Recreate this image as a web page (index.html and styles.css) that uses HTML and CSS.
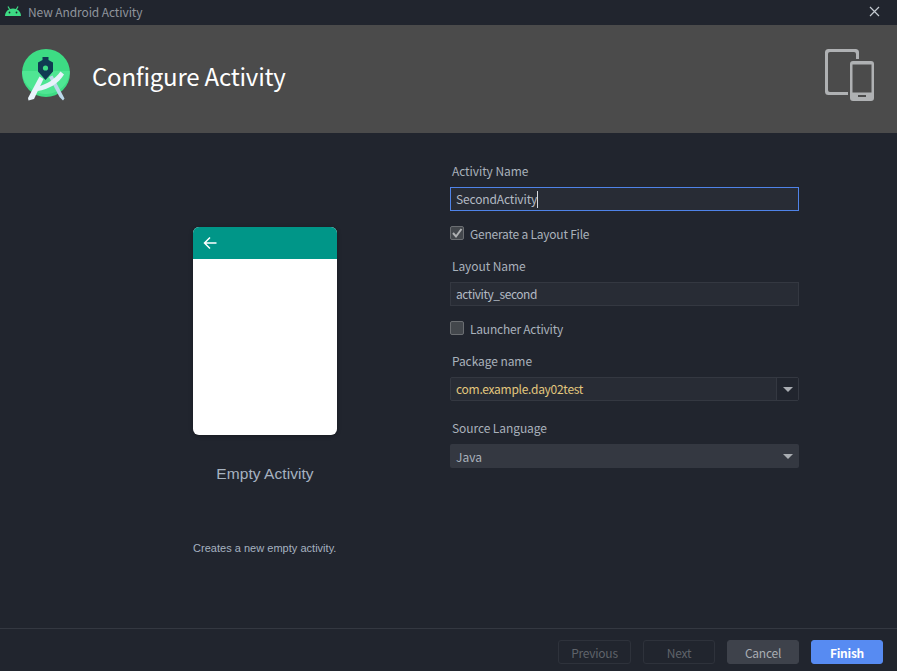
FILE: index.html
```html
<!DOCTYPE html>
<html lang="en">
<head>
<meta charset="utf-8">
<title>New Android Activity</title>
<link rel="stylesheet" href="styles.css">
</head>
<body>
<div class="window">
  <header class="titlebar">
    <svg class="android" width="16" height="10" viewBox="0 0 16 10"><path d="M0 10C0 5.500 3.500 2.500 8 2.500S16 5.500 16 10Z" fill="#3ddc84"/><path d="M3 0.500 5 4M13 0.500 11 4" stroke="#3ddc84" stroke-width="1.200"/><circle cx="4.500" cy="6.500" r="0.900" fill="#21252e"/><circle cx="11.500" cy="6.500" r="0.900" fill="#21252e"/></svg>
    <span class="titlebar-text">New Android Activity</span>
    <svg class="close" width="11" height="11" viewBox="0 0 11 11"><path d="M1 1 10 10M10 1 1 10" stroke="#c4cad1" stroke-width="1.200"/></svg>
  </header>
  <section class="banner">
    <svg class="logo" width="48" height="53" viewBox="0 0 48 53">
      <circle cx="24" cy="24" r="24" fill="#3ddc84"/>
      <path d="M0.200 22H47.800A24 24 0 0 1 0 24Z" fill="#57ea9a" opacity=".7"/>
      <path d="M27 28 30.500 26.500 42.500 49.500 41 51.500 37.500 48Z" fill="#bcd8ea"/>
      <path d="M15.500 42C27 40.500 37 34 42 25.500L38.500 22.500C33 30 25 35.500 14.500 38Z" fill="#e8f3fb"/>
      <path d="M17.500 27.500 21.500 30 12 50 6.500 51.500 6 49Z" fill="#e8f3fb"/>
      <path d="M20.500 8H26.500V11L31 13.500V22.500L23.500 31 16 22.500V13.500L20.500 11Z" fill="#0f3a52"/>
      <circle cx="23.500" cy="19" r="2.600" fill="#3ddc84"/>
    </svg>
    <h1 class="banner-title">Configure Activity</h1>
    <svg class="devices" width="49" height="52" viewBox="0 0 49 52">
      <path d="M3.500 0H30.500A3.500 3.500 0 0 1 34 3.500V10H31V5A2 2 0 0 0 29 3H5A2 2 0 0 0 3 5V41A2 2 0 0 0 5 43H23V46H3.500A3.500 3.500 0 0 1 0 42.500V3.500A3.500 3.500 0 0 1 3.500 0Z" fill="#afb1b3"/>
      <path fill-rule="evenodd" d="M28 12H46A3 3 0 0 1 49 15V49A3 3 0 0 1 46 52H28A3 3 0 0 1 25 49V15A3 3 0 0 1 28 12ZM27.500 15.500V43.500H46.500V15.500ZM33 46V48H41V46Z" fill="#afb1b3"/>
    </svg>
  </section>
  <main class="content">
    <aside class="preview">
      <div class="phone">
        <div class="phone-bar">
          <svg width="14" height="14" viewBox="0 0 14 14"><path d="M13.500 7H1.500M7 1.500 1.500 7 7 12.500" stroke="#fff" stroke-width="1.500" fill="none"/></svg>
        </div>
      </div>
      <div class="preview-title">Empty Activity</div>
      <p class="preview-desc">Creates a new empty activity.</p>
    </aside>
    <form class="form">
      <label class="field-label first">Activity Name</label>
      <div class="input focused"><span class="input-text name">SecondActivity</span><i class="caret"></i></div>
      <div class="check-row">
        <span class="checkbox"><svg width="12" height="12" viewBox="0 0 12 12"><path d="M2 6 5 9.500 10.500 2" stroke="#afb1b3" stroke-width="2" fill="none"/></svg></span>
        <span class="check-text">Generate a Layout File</span>
      </div>
      <label class="field-label">Layout Name</label>
      <div class="input"><span class="input-text layout">activity_second</span></div>
      <div class="check-row">
        <span class="checkbox"></span>
        <span class="check-text">Launcher Activity</span>
      </div>
      <label class="field-label">Package name</label>
      <div class="input combo">
        <span class="input-text combo-text">com.example.day02test</span>
        <span class="combo-arrow"><i class="arrow"></i></span>
      </div>
      <label class="field-label lang">Source Language</label>
      <div class="select"><span class="input-text java">Java</span><i class="arrow"></i></div>
    </form>
  </main>
  <footer class="footer">
    <button class="btn disabled prev" type="button">Previous</button>
    <button class="btn disabled" type="button">Next</button>
    <button class="btn cancel" type="button">Cancel</button>
    <button class="btn primary" type="button">Finish</button>
  </footer>
</div>
</body>
</html>
```

FILE: styles.css
```css
* { box-sizing: border-box; }
html, body { margin: 0; padding: 0; }
body { background: #21252e; font-family: "Noto Sans CJK KR", "Noto Sans", sans-serif; font-size: 12px; color: #a9b1bb; }
.window { width: 897px; height: 671px; display: flex; flex-direction: column; overflow: hidden; }
.titlebar { height: 25px; flex: none; display: flex; align-items: center; padding: 0 17px 0 5px; background: #21252e; }
.android { margin-bottom: 3px; }
.titlebar-text { margin-left: 7px; margin-bottom: 2px; color: #8f949c; flex: 1; line-height: 16px; letter-spacing: -.1px; }
.close { margin-bottom: 3px; }
.banner { height: 108px; flex: none; display: flex; align-items: flex-start; background: #4b4b4b; padding: 24px 23px 0 22px; }
.logo { flex: none; }
.banner-title { flex: 1; margin: 11px 0 0 22px; font-size: 24px; line-height: 32px; font-weight: 400; letter-spacing: -.22px; color: #fff; }
.devices { flex: none; }
.content { flex: 1; display: flex; align-items: flex-start; }
.preview { width: 144px; margin-left: 193px; padding-top: 94px; flex: none; }
.phone { height: 208px; background: #fff; border-radius: 6px; overflow: hidden; box-shadow: 0 1px 4px rgba(0,0,0,.3); }
.phone-bar { height: 32px; background: #009688; display: flex; align-items: center; padding-left: 10px; }
.phone-bar svg { display: block; }
.preview-title { margin-top: 29px; text-align: center; font-family: "Liberation Sans", sans-serif; font-size: 15.500px; letter-spacing: .06px; line-height: 20px; color: #a6b2c0; white-space: nowrap; }
.preview-desc { margin: 57px 0 0; font-family: "Liberation Sans", sans-serif; font-size: 11px; letter-spacing: .02px; line-height: 14px; color: #a6b2c0; white-space: nowrap; }
.form { width: 349px; margin-left: 113px; flex: none; }
.field-label { display: block; height: 16px; line-height: 16px; margin: 18px 0 8px 2px; letter-spacing: -.08px; color: #a9b1bb; }
.field-label.first { margin-top: 30px; margin-bottom: 8px; }
.field-label.lang { margin-top: 19px; margin-bottom: 8px; }
.input { height: 24px; padding: 0 5px; background: #282c35; border: 1px solid #343841; color: #b3bac4; display: flex; align-items: center; line-height: 16px; }
.input.focused { border-color: #4f83e8; }
.input-text { line-height: 16px; }
.input-text.name { letter-spacing: -.14px; }
.input-text.layout { letter-spacing: -.45px; }
.input-text.java { padding-top: 2px; }
.caret { display: inline-block; width: 1px; height: 17px; background: #d5d9de; }
.check-row { height: 14px; margin-top: 15px; display: flex; align-items: center; gap: 6px; color: #a9b1bb; line-height: 14px; }
.check-text { padding-top: 1px; letter-spacing: -.22px; }
.checkbox { width: 14px; height: 14px; flex: none; border: 1px solid #6b6e72; border-radius: 2px; background: #43474c; display: flex; align-items: center; justify-content: center; }
.combo { padding-right: 0; border-radius: 2px; }
.combo-text { flex: 1; color: #e2c77e; letter-spacing: -.28px; }
.combo-arrow { width: 22px; height: 22px; border-left: 1px solid #343841; display: flex; align-items: center; justify-content: center; background: #21252e; }
.arrow { width: 0; height: 0; border-left: 5px solid transparent; border-right: 5px solid transparent; border-top: 5px solid #a9adb2; }
.select { height: 24px; padding: 0 6px 0 6px; background: #343841; border-radius: 2px; display: flex; align-items: center; justify-content: space-between; color: #a9b1bb; }
.footer { height: 43px; flex: none; border-top: 1px solid #343841; display: flex; justify-content: flex-end; align-items: flex-start; padding: 11px 14px 0 0; gap: 12px; }
.btn { width: 72px; height: 24px; padding: 1px 0 0; border-radius: 3px; font-family: inherit; font-size: 12px; line-height: 18px; letter-spacing: -.25px; }
.btn.prev { width: 73px; }
.btn.disabled { background: transparent; border: 1px solid #2e323b; color: #5f636a; }
.btn.cancel { background: #3e424b; border: 1px solid #3e424b; color: #a9adb3; }
.btn.primary { background: #578bf2; border: 1px solid #578bf2; color: #fff; font-weight: 700; }
```
